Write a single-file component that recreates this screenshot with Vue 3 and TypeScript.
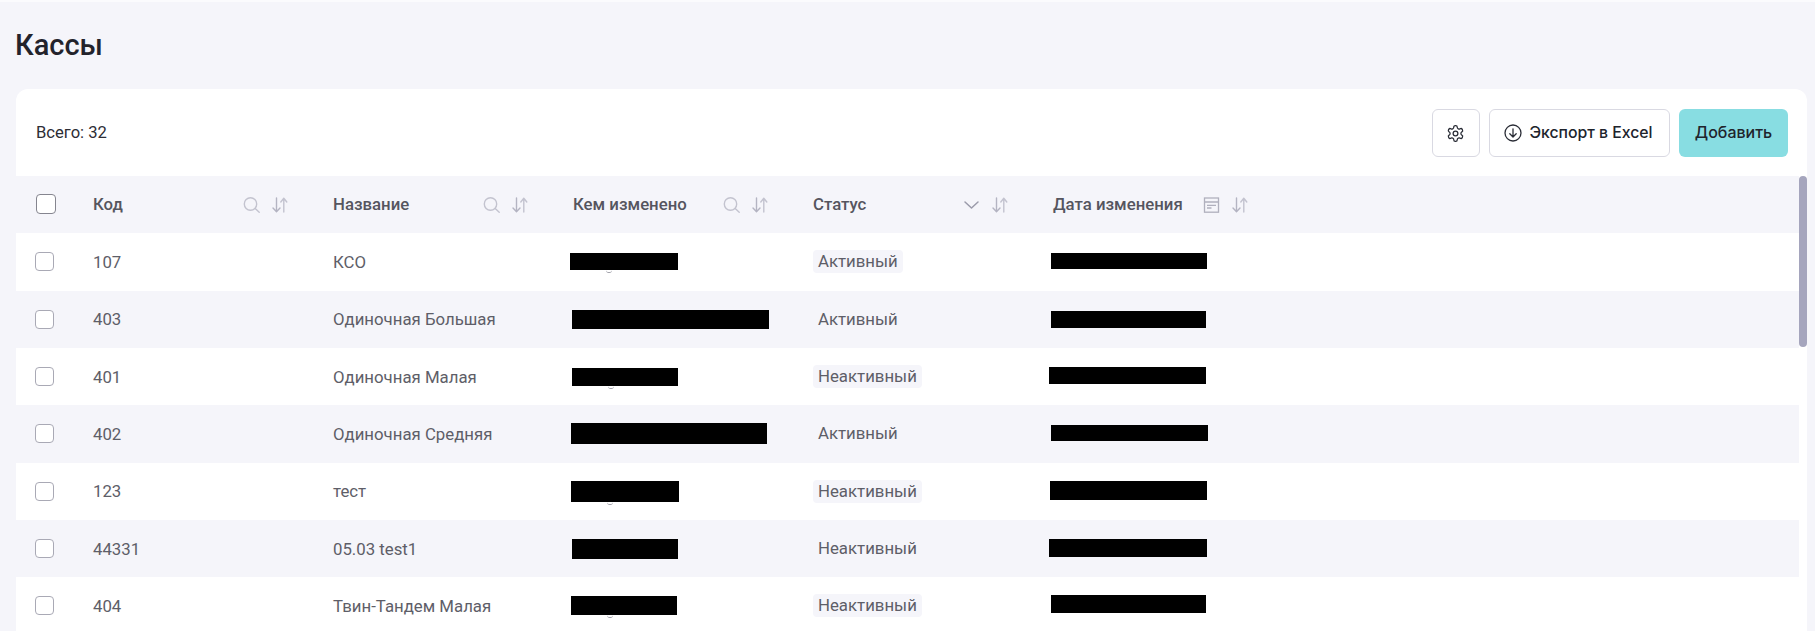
<script setup lang="ts">
interface Box { w: number; h: number; dx: number; dy: number; peek?: boolean }
interface Row { code: string; name: string; by: Box; status: string; date: Box }
const columns = [
  { label: 'Код', icon: 'search' },
  { label: 'Название', icon: 'search' },
  { label: 'Кем изменено', icon: 'search' },
  { label: 'Статус', icon: 'chevron' },
  { label: 'Дата изменения', icon: 'calendar' },
]
const rows: Row[] = [
  { code: '107', name: 'КСО', status: 'Активный', by: { w: 108, h: 17, dx: -3, dy: 0, peek: true }, date: { w: 156, h: 16, dx: -2, dy: -1 } },
  { code: '403', name: 'Одиночная Большая', status: 'Активный', by: { w: 197, h: 19, dx: -1, dy: 0 }, date: { w: 155, h: 17, dx: -2, dy: 0 } },
  { code: '401', name: 'Одиночная Малая', status: 'Неактивный', by: { w: 106, h: 18, dx: -1, dy: 0, peek: true }, date: { w: 157, h: 17, dx: -4, dy: -1 } },
  { code: '402', name: 'Одиночная Средняя', status: 'Активный', by: { w: 196, h: 21, dx: -2, dy: 0 }, date: { w: 157, h: 16, dx: -2, dy: -1 } },
  { code: '123', name: 'тест', status: 'Неактивный', by: { w: 108, h: 21, dx: -2, dy: 0, peek: true }, date: { w: 157, h: 19, dx: -3, dy: -1 } },
  { code: '44331', name: '05.03 test1', status: 'Неактивный', by: { w: 106, h: 20, dx: -1, dy: 0 }, date: { w: 158, h: 18, dx: -4, dy: -1 } },
  { code: '404', name: 'Твин-Тандем Малая', status: 'Неактивный', by: { w: 106, h: 19, dx: -2, dy: 0, peek: true }, date: { w: 155, h: 18, dx: -2, dy: -2 } },
]
function boxStyle(b: Box) {
  return { width: b.w + 'px', height: b.h + 'px', marginLeft: b.dx + 'px', marginTop: b.dy * 2 + 'px' }
}
</script>

<template>
  <div class="page">
    <h1 class="title">Кассы</h1>
    <section class="card">
      <div class="toolbar">
        <span class="total">Всего: 32</span>
        <div class="actions">
          <button class="btn btn-icon" type="button" aria-label="Настройки">
            <svg class="gear" width="19" height="19" viewBox="0 0 24 24" fill="none" stroke="#2a2d36" stroke-width="1.6" stroke-linecap="round" stroke-linejoin="round"><path d="M12.22 2h-.44a2 2 0 0 0-2 2v.18a2 2 0 0 1-1 1.73l-.43.25a2 2 0 0 1-2 0l-.15-.08a2 2 0 0 0-2.73.73l-.22.38a2 2 0 0 0 .73 2.73l.15.1a2 2 0 0 1 1 1.72v.51a2 2 0 0 1-1 1.74l-.15.09a2 2 0 0 0-.73 2.73l.22.38a2 2 0 0 0 2.73.73l.15-.08a2 2 0 0 1 2 0l.43.25a2 2 0 0 1 1 1.73V20a2 2 0 0 0 2 2h.44a2 2 0 0 0 2-2v-.18a2 2 0 0 1 1-1.73l.43-.25a2 2 0 0 1 2 0l.15.08a2 2 0 0 0 2.73-.73l.22-.39a2 2 0 0 0-.73-2.73l-.15-.08a2 2 0 0 1-1-1.74v-.5a2 2 0 0 1 1-1.74l.15-.09a2 2 0 0 0 .73-2.73l-.22-.38a2 2 0 0 0-2.73-.73l-.15.08a2 2 0 0 1-2 0l-.43-.25a2 2 0 0 1-1-1.73V4a2 2 0 0 0-2-2z"/><circle cx="12" cy="12" r="3"/></svg>
          </button>
          <button class="btn btn-export" type="button">
            <svg width="18" height="18" viewBox="0 0 18 18" fill="none" stroke="#2a2d36" stroke-width="1.3" stroke-linecap="round" stroke-linejoin="round"><circle cx="9" cy="9" r="8"/><path d="M9 4.800v8M5.800 9.800 9 13l3.200-3.200"/></svg>
            <span class="export-label">Экспорт в Excel</span>
          </button>
          <button class="btn btn-add" type="button">Добавить</button>
        </div>
      </div>
      <div class="table-area">
        <div class="table">
          <div class="row head">
            <div class="check-cell"><span class="check check-head"></span></div>
            <div v-for="c in columns" :key="c.label" class="cell head-cell">
              <span class="head-label">{{ c.label }}</span>
              <span class="head-icons">
                <svg v-if="c.icon === 'search'" width="17" height="16" viewBox="0 0 17 16" fill="none" stroke="#c3c3cf" stroke-width="1.4" stroke-linecap="round"><circle cx="7.500" cy="7" r="6.200"/><path d="m12.200 11.500 4 3.800"/></svg>
                <svg v-else-if="c.icon === 'chevron'" width="17" height="16" viewBox="0 0 17 16" fill="none" stroke="#9b9baa" stroke-width="1.5" stroke-linecap="round" stroke-linejoin="round"><path d="m2 5 6.500 6L15 5"/></svg>
                <svg v-else width="17" height="16" viewBox="0 0 17 16" fill="none" stroke="#b0b0bd" stroke-width="1.3"><rect x="1.500" y="1" width="14" height="14.200"/><path d="M1.500 5h14M4 8.300h9M4 11h4.500"/></svg>
                <svg width="16" height="16" viewBox="0 0 16 16" fill="none" stroke="#b4b4c2" stroke-width="1.4" stroke-linecap="round" stroke-linejoin="round"><path d="M4.500 1v13.500M1 11l3.500 3.700L8 11"/><path d="M11.800 15V1.500M8.800 5l3-3.700 3 3.700" stroke="#c3c3cf"/></svg>
              </span>
            </div>
          </div>
          <div v-for="(r, i) in rows" :key="r.code" class="row body" :class="{ alt: i % 2 === 1 }">
            <div class="check-cell"><span class="check"></span></div>
            <div class="cell">{{ r.code }}</div>
            <div class="cell">{{ r.name }}</div>
            <div class="cell"><span class="redact" :class="{ peek: r.by.peek }" :style="boxStyle(r.by)"></span></div>
            <div class="cell"><span class="tag">{{ r.status }}</span></div>
            <div class="cell"><span class="redact" :style="boxStyle(r.date)"></span></div>
          </div>
        </div>
        <div class="scrollbar"><div class="thumb"></div></div>
      </div>
    </section>
  </div>
</template>

<style>
html, body { margin: 0; background: #f5f5fa; }
</style>

<style scoped>
.page {
  box-sizing: border-box;
  height: 631px;
  overflow: hidden;
  border-top: 2px solid #fbfbfd;
  padding: 0 8px 0 16px;
  background: #f5f5fa;
  font-family: Roboto, "Liberation Sans", sans-serif;
}
.title {
  margin: 0 0 0 -1px;
  height: 87px;
  box-sizing: border-box;
  padding-top: 26px;
  font-size: 29px;
  line-height: 34px;
  font-weight: 500;
  color: #23232b;
}
.card {
  background: #fff;
  border-radius: 12px 12px 0 0;
  height: 542px;
  overflow: hidden;
  display: flex;
  flex-direction: column;
}
.toolbar {
  height: 87px;
  flex: none;
  box-sizing: border-box;
  padding: 20px 19px 19px 20px;
  display: flex;
  justify-content: space-between;
  align-items: center;
}
.total {
  font-size: 16.600px;
  color: #2d2d35;
  margin-top: -2px;
}
.actions {
  display: flex;
  gap: 9px;
}
.btn {
  height: 48px;
  box-sizing: border-box;
  border-radius: 6px;
  border: 1px solid #d9d9e2;
  background: #fff;
  font-family: Inter, "Liberation Sans", sans-serif;
  font-size: 16px;
  font-weight: 500;
  color: #20242c;
  display: flex;
  align-items: center;
  justify-content: center;
  padding: 0;
}
.btn-icon { width: 48px; }
.gear { margin-right: 1px; }
.btn-export { width: 181px; gap: 7px; padding-right: 2px; }
.export-label { font-size: 15.800px; margin-top: -2px; }
.btn-add { width: 109px; border: none; background: #88dde2; padding-bottom: 2px; }
.table-area {
  flex: 1;
  display: flex;
  min-height: 0;
}
.table {
  flex: 1;
  min-width: 0;
}
.scrollbar {
  width: 8px;
  flex: none;
}
.thumb {
  height: 171px;
  border-radius: 4px;
  background: #a5a5bd;
}
.row {
  display: flex;
  align-items: center;
  height: 57.330px;
}
.head { background: #f5f5fa; }
.alt { background: #f5f5fa; }
.check-cell {
  width: 77px;
  flex: none;
  box-sizing: border-box;
  padding-left: 19px;
  display: flex;
}
.check {
  width: 19px;
  height: 19px;
  box-sizing: border-box;
  border: 1px solid #a9a9b5;
  border-radius: 4px;
  background: #fff;
}
.check-head {
  width: 20px;
  height: 20px;
  margin-left: 1px;
  margin-top: -2px;
  border-color: #85858f;
}
.cell {
  width: 240px;
  flex: none;
  box-sizing: border-box;
  display: flex;
  align-items: center;
  font-size: 16.800px;
  color: #5e5e68;
}
.head-cell {
  padding-right: 45px;
  justify-content: space-between;
}
.head-label {
  font-weight: 500;
  color: #55555f;
  margin-top: -2px;
}
.head-icons {
  display: flex;
  gap: 12px;
  align-items: center;
}
.tag {
  background: #f5f5fa;
  border-radius: 4px;
  padding: 0 5px;
  line-height: 23px;
}
.redact {
  display: block;
  flex: none;
  background: #000;
  position: relative;
}
.peek::after {
  content: "";
  position: absolute;
  left: 36px;
  top: 100%;
  width: 6px;
  height: 2px;
  border-bottom: 1px solid #9a9aa4;
  border-radius: 0 0 4px 4px;
}
</style>
